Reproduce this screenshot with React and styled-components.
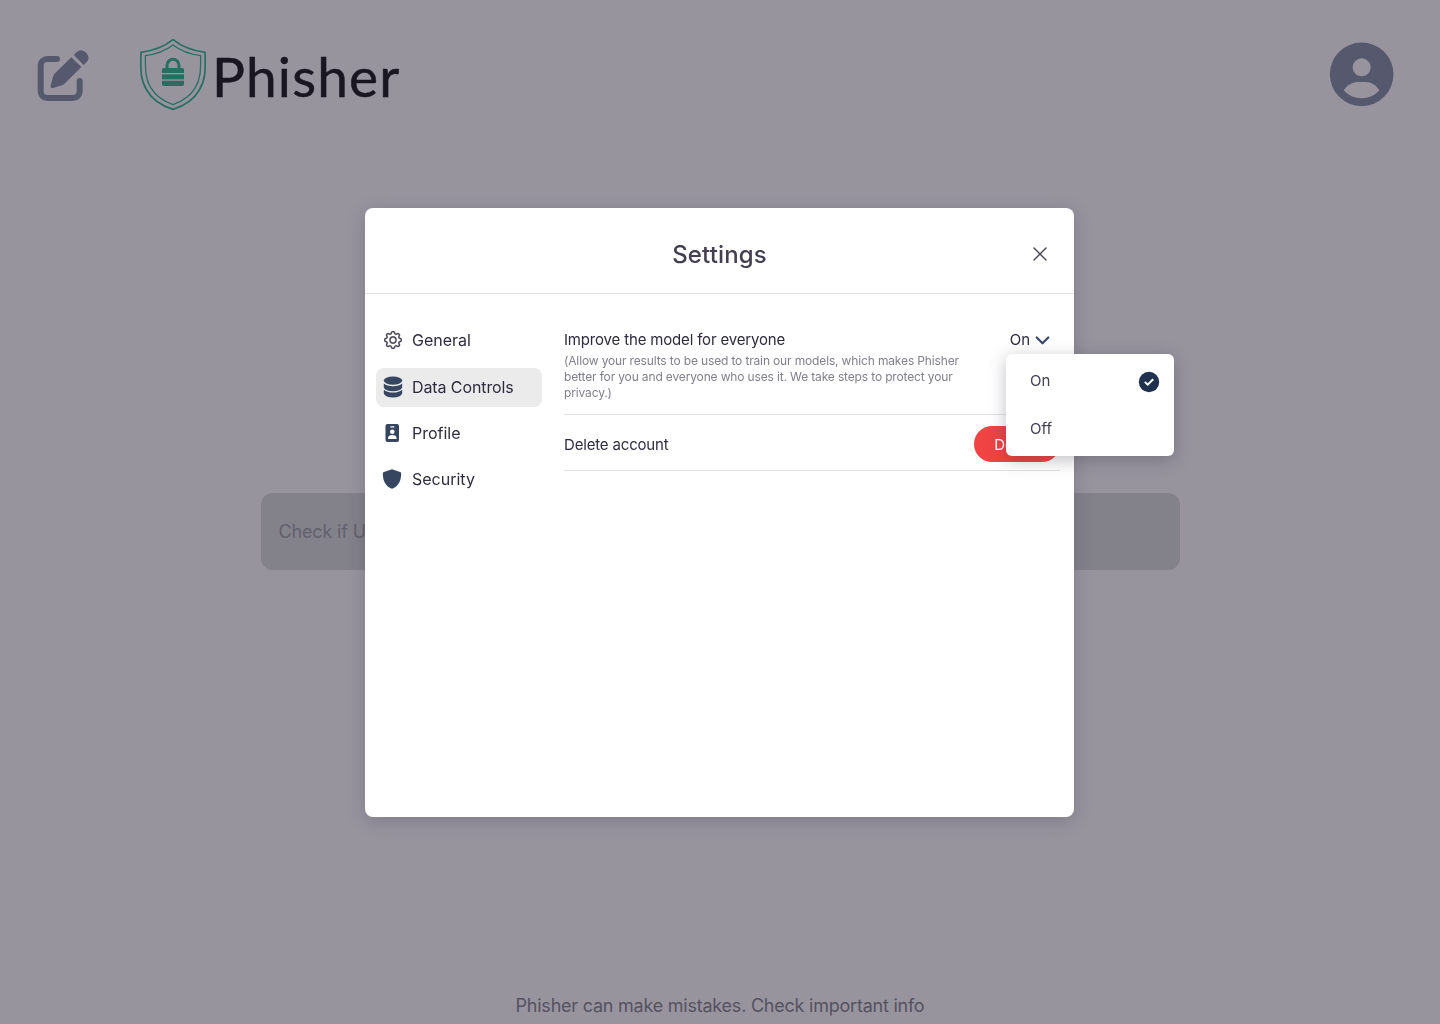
import React from "react";
import styled, { createGlobalStyle } from "styled-components";
import { BsGear } from "react-icons/bs";

const GlobalStyle = createGlobalStyle`
  *, *::before, *::after { box-sizing: border-box; }
  body {
    margin: 0;
    overflow: hidden;
    background: #97949e;
    font-family: Inter, "Liberation Sans", sans-serif;
  }
  button { font: inherit; border: 0; padding: 0; background: none; }
  svg { display: block; flex: none; }
`;

const Page = styled.div`
  height: 1024px;
  display: flex;
  flex-direction: column;
  align-items: center;
`;
const TopBar = styled.header`
  width: 100%;
  height: 148px;
  padding: 38px 46px 0 37px;
  display: flex;
  align-items: flex-start;
`;
const ComposeButton = styled.button`
  margin: 11px 50px 0 0;
`;
const Brand = styled.div`
  display: flex;
  flex: 1;
`;
const BrandName = styled.span`
  margin: 5px 0 0 5px;
  font: 400 55px/66px Lato, sans-serif;
  letter-spacing: 1.15px;
  -webkit-text-stroke: 0.5px #191621;
  color: #191621;
  white-space: nowrap;
`;
const AvatarButton = styled.button`
  margin-top: 4px;
`;
const SearchBar = styled.div`
  width: 919px;
  height: 77px;
  margin-top: 345px;
  padding: 0 18px;
  display: flex;
  align-items: center;
  border-radius: 12px;
  background: #83818a;
  color: #62606c;
  font-size: 18px;
  letter-spacing: -0.15px;
`;
const Disclaimer = styled.footer`
  margin-top: auto;
  height: 36px;
  font-size: 18px;
  line-height: 36px;
  letter-spacing: -0.23px;
  color: #55525f;
  white-space: nowrap;
`;

const Overlay = styled.div`
  position: fixed;
  inset: 0;
  padding: 208px 366px 207px 365px;
  display: flex;
`;
const Dialog = styled.section`
  flex: 1;
  display: flex;
  flex-direction: column;
  border-radius: 8px;
  background: #fff;
  color: #2f2b3d;
  box-shadow: 0 4px 18px rgba(47, 43, 61, 0.22);
`;
const DialogHeader = styled.div`
  height: 86px;
  padding: 7px 27px 0;
  display: grid;
  grid-template-columns: 14px 1fr 14px;
  align-items: center;
  border-bottom: 1px solid #e2e1e4;
`;
const Title = styled.h1`
  grid-column: 2;
  margin: 0;
  padding-top: 1px;
  text-align: center;
  font-size: 24px;
  line-height: 36px;
  font-weight: 500;
  letter-spacing: 0.12px;
  color: #444050;
`;
const DialogBody = styled.div`
  flex: 1;
  display: flex;
  padding: 27px 14px 0 11px;
`;
const Nav = styled.nav`
  width: 166px;
  display: flex;
  flex-direction: column;
  gap: 7px;
`;
const NavItem = styled.button`
  height: 39px;
  margin-bottom: ${(p) => (p.$gapAfter || 0)}px;
  padding: 0 0 2px 6px;
  display: flex;
  align-items: center;
  gap: 8px;
  border-radius: 8px;
  background: ${(p) => (p.$active ? "#ebebeb" : "transparent")};
  color: #2f2b3d;
  font-size: 16px;
  letter-spacing: ${(p) => p.$tracking || "0"};
`;
const NavIcon = styled.span`
  width: 22px;
  height: 22px;
  display: flex;
  align-items: center;
  justify-content: center;
  color: #444050;
`;
const Panel = styled.div`
  flex: 1;
  margin-left: 22px;
`;
const SettingRow = styled.div`
  height: ${(p) => p.$height}px;
  padding-top: ${(p) => p.$top}px;
  display: flex;
  justify-content: space-between;
  align-items: flex-start;
  border-bottom: 1px solid #e2e1e4;
`;
const SettingLabel = styled.div`
  font-size: 15px;
  line-height: 22px;
  letter-spacing: -0.17px;
  padding-top: ${(p) => p.$top || 0}px;
`;
const SettingHint = styled.p`
  width: 410px;
  margin: 2px 0 0;
  font-size: 12px;
  line-height: 16px;
  letter-spacing: -0.145px;
  color: #827f8a;
`;
const SelectWrap = styled.div`
  position: relative;
  margin-right: 10px;
`;
const SelectTrigger = styled.button`
  height: 22px;
  padding-bottom: 1px;
  display: flex;
  align-items: center;
  gap: 5px;
  font-size: 15px;
  color: #2f2b3d;
`;
const Menu = styled.div`
  position: absolute;
  top: 25px;
  right: -124px;
  width: 168px;
  height: 102px;
  padding: 2px 14px 4px 24px;
  border-radius: 6px;
  background: #fff;
  box-shadow: 0 4px 18px rgba(47, 43, 61, 0.3);
`;
const MenuItem = styled.div`
  height: 48px;
  display: flex;
  align-items: center;
  justify-content: space-between;
  font-size: 15px;
  color: #444050;
`;
const MenuCheck = styled.span`
  padding-top: 4px;
`;
const DeleteButton = styled.button`
  width: 86px;
  height: 36px;
  border-radius: 18px;
  background: #f04444;
  color: #fff;
  font-size: 15px;
`;

const ComposeIcon = () => (
  <svg width="52" height="53" viewBox="51 57 156 159" fill="#56596d">
    <path
      d="M111 87H82a20 20 0 0 0-20 20v77a20 20 0 0 0 20 20h77a20 20 0 0 0 20-20v-31"
      fill="none" stroke="#56596d" strokeWidth="18" strokeLinecap="round"
    />
    <path d="M154 82l30 29-49 49q-4 4-9 6l-27 8q-9 2-7-7l7-27q2-6 6-10z" />
    <path d="M161 75l10-10q11-9 24 0l6 6q9 11 0 24l-10 10z" />
  </svg>
);

const ShieldLogo = () => (
  <svg width="68" height="73" viewBox="27 24 204 219" fill="none" stroke="#286f61">
    <path strokeWidth="5" strokeLinejoin="round" d="M129 29C104 49 71 62 33 67C31 125 32 150 50 180C67 210 94 227 129 238C164 227 191 210 208 180C226 150 227 125 225 67C187 62 154 49 129 29Z" />
    <path strokeWidth="3.8" d="M129 45C108 61 78 73 46 77C46 127 47 147 62 173C78 199 100 214 129 224C158 214 180 199 196 173C211 147 212 127 212 77C180 73 150 61 129 45Z" />
    <path strokeWidth="9" d="M111 116v-10a18 18 0 0 1 36 0v10" />
    <g fill="#286f61" stroke="none">
      <path d="M101 114h56q5 0 5 5v10H96v-10q0-5 5-5z" />
      <path d="M96 133h66v15H96z" />
      <path d="M96 152h66v11q0 5-5 5h-56q-5 0-5-5z" />
    </g>
  </svg>
);

const AvatarIcon = () => (
  <svg width="65" height="66" viewBox="57 35 195 198">
    <circle cx="155" cy="132" r="95.5" fill="#56596d" />
    <circle cx="155" cy="111" r="27" fill="#97949e" />
    <path fill="#97949e" d="M101 180C112 164 127 155 143 155h24C183 155 198 164 208 180C195 196 176 204 155 204S114 196 101 180Z" />
  </svg>
);

const CloseIcon = () => (
  <svg width="14" height="14" viewBox="0 0 14 14" stroke="#444050" strokeWidth="1.4" strokeLinecap="round">
    <path d="M1 1l12 12M13 1L1 13" />
  </svg>
);

const DatabaseIcon = () => (
  <svg width="20" height="22" viewBox="0 0 20 22" fill="#364661">
    <ellipse cx="10" cy="4.6" rx="9.2" ry="4.1" />
    <path d="M.8 7.6Q4 10.300 10 10.300T19.200 7.600V11.400Q17.500 15.200 10 15.200T.8 11.400z" />
    <path d="M.8 13.800Q4 16.600 10 16.600T19.200 13.800V17.500Q17.500 21.500 10 21.500T.8 17.500z" />
  </svg>
);

const BadgeIcon = () => (
  <svg width="22" height="20" viewBox="0 0 22 20">
    <rect x="3.500" y="1" width="13.500" height="18" rx="2" fill="#364661" />
    <rect x="8.200" y="3.300" width="4.200" height="1.300" rx=".6" fill="#fff" />
    <circle cx="10.300" cy="8.800" r="2.300" fill="#fff" />
    <path d="M6.100 15.900v-1c0-1.700 1.700-2.900 4.200-2.900s4.200 1.200 4.200 2.900v1z" fill="#fff" />
  </svg>
);

const ShieldIcon = () => (
  <svg width="22" height="20" viewBox="0 0 22 20" fill="#364661">
    <path d="M10 .2q.4 0 .8.2l7.300 2.600q1.100.4 1.100 1.500C19.200 11.500 16.500 17.200 10.700 19.600q-.7.3-1.400 0C3.500 17.200.8 11.500.8 4.500q0-1.100 1.100-1.500L9.200.4q.4-.2.8-.2z" />
  </svg>
);

const ChevronIcon = () => (
  <svg width="15" height="10" viewBox="0 0 15 10" fill="none" stroke="#364a6b" strokeWidth="2.200" strokeLinecap="round" strokeLinejoin="round">
    <path d="M1.700 2.500l5.800 5.800L13.300 2.500" />
  </svg>
);

const CheckIcon = () => (
  <svg width="22" height="22" viewBox="0 0 22 22">
    <circle cx="11" cy="11" r="10.200" fill="#20304f" />
    <path d="M6.800 10.900l2.900 2.800L15.200 8.200" fill="none" stroke="#fff" strokeWidth="2" />
  </svg>
);

export default function App() {
  return (
    <>
      <GlobalStyle />
      <Page>
        <TopBar>
          <ComposeButton aria-label="New check"><ComposeIcon /></ComposeButton>
          <Brand>
            <ShieldLogo />
            <BrandName>Phisher</BrandName>
          </Brand>
          <AvatarButton aria-label="Account"><AvatarIcon /></AvatarButton>
        </TopBar>
        <SearchBar>Check if U</SearchBar>
        <Disclaimer>Phisher can make mistakes. Check important info</Disclaimer>
      </Page>
      <Overlay>
        <Dialog role="dialog" aria-label="Settings">
          <DialogHeader>
            <Title>Settings</Title>
            <button aria-label="Close"><CloseIcon /></button>
          </DialogHeader>
          <DialogBody>
            <Nav>
              <NavItem $gapAfter={1}>
                <NavIcon><BsGear size={18} stroke="#444050" strokeWidth={0.35} /></NavIcon>General
              </NavItem>
              <NavItem $active $tracking="-0.1px">
                <NavIcon><DatabaseIcon /></NavIcon>Data Controls
              </NavItem>
              <NavItem><NavIcon><BadgeIcon /></NavIcon>Profile</NavItem>
              <NavItem><NavIcon><ShieldIcon /></NavIcon>Security</NavItem>
            </Nav>
            <Panel>
              <SettingRow $height={94} $top={8}>
                <div>
                  <SettingLabel>Improve the model for everyone</SettingLabel>
                  <SettingHint>
                    (Allow your results to be used to train our models, which makes Phisher<br />
                    better for you and everyone who uses it. We take steps to protect your<br />
                    privacy.)
                  </SettingHint>
                </div>
                <SelectWrap>
                  <SelectTrigger>On<ChevronIcon /></SelectTrigger>
                  <Menu>
                    <MenuItem>On<MenuCheck><CheckIcon /></MenuCheck></MenuItem>
                    <MenuItem>Off</MenuItem>
                  </Menu>
                </SelectWrap>
              </SettingRow>
              <SettingRow $height={56} $top={11}>
                <SettingLabel $top={8}>Delete account</SettingLabel>
                <DeleteButton>Delete</DeleteButton>
              </SettingRow>
            </Panel>
          </DialogBody>
        </Dialog>
      </Overlay>
    </>
  );
}
